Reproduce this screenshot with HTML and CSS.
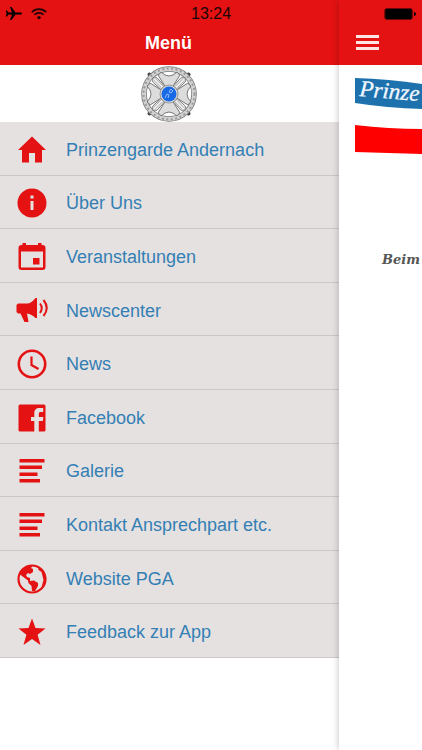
FILE: index.html
```html
<!DOCTYPE html>
<html lang="de">
<head>
<meta charset="utf-8">
<meta name="viewport" content="width=device-width, initial-scale=1">
<title>Menü</title>
<link rel="stylesheet" href="styles.css">
</head>
<body>
<div class="status">
  <div class="status-side">
    <svg width="18" height="16" viewBox="0 0 18 16"><path d="M17 7.500c0 .7-.8 1-1.800 1H10.500L6.500 14H5l2-5.500H3.500L2 10.500H.8L1.600 7.500.8 4.500H2L3.500 6.500H7L5 1h1.500l4 5.500h4.700c1 0 1.800.3 1.800 1z"/></svg>
    <svg width="16" height="12" viewBox="0 0 16 12" fill="none" stroke="#190606" stroke-width="1.600"><path d="M.8 4.200C4.800.1 11.200.1 15.200 4.200M3.400 6.800c2.600-2.600 6.600-2.600 9.200 0"/><circle cx="8" cy="9.600" r="1.700" fill="#190606" stroke="none"/></svg>
  </div>
  <time class="clock">13:24</time>
  <div class="status-side status-end">
    <svg width="33" height="14" viewBox="0 0 33 14"><rect x=".8" y="1.500" width="27.500" height="11" rx="2" fill="#000" stroke="#6b0808"/><path d="M30 5c2.600.6 2.600 3.400 0 4z"/></svg>
  </div>
</div>
<div class="app">
  <nav class="menu" aria-label="Menü">
    <header class="bar menu-bar"><h1>Menü</h1></header>
    <div class="emblem">
      <svg width="58" height="58" viewBox="-29 -29 58 58">
        <defs>
          <g id="arm"><path d="M-3.500-7L-11-19Q-9-20-8-22Q-4-18 0-18Q4-18 8-22Q9-20 11-19L3.500-7z" fill="#dcdcdc" stroke="#777" stroke-width="1"/></g>
          <g id="ray"><path d="M-2.500-9L-3-20 0-23 3-20 2.500-9z" fill="#eee" stroke="#777" stroke-width=".9"/><path d="M-1-10V-20M1.500-10V-20" stroke="#999" stroke-width=".8"/></g>
        </defs>
        <g fill="#444"><circle cx="-19.500" cy="-19.500" r="2"/><circle cx="19.500" cy="-19.500" r="2"/><circle cx="-19.500" cy="19.500" r="2"/><circle cx="19.500" cy="19.500" r="2"/></g>
        <circle r="25" fill="#fff" stroke="#777" stroke-width="5.500"/>
        <circle r="25" fill="none" stroke="#d2d2d2" stroke-width="4"/>
        <circle r="25.500" fill="none" stroke="#999" stroke-width="2" stroke-dasharray="2 2.500"/>
        <use href="#ray" transform="rotate(45)"/><use href="#ray" transform="rotate(135)"/><use href="#ray" transform="rotate(225)"/><use href="#ray" transform="rotate(315)"/>
        <use href="#arm"/><use href="#arm" transform="rotate(90)"/><use href="#arm" transform="rotate(180)"/><use href="#arm" transform="rotate(270)"/>
        <circle r="9" fill="#d8d8d8" stroke="#999"/>
        <circle r="7.500" fill="#1769e6"/>
        <path d="M-4 4L-2 0 0 1-1 4M0-2L2-5 4-3 2-1z" fill="none" stroke="#91bcff" stroke-width="1"/>
      </svg>
    </div>
    <ul class="items">
      <li><a href="#home"><svg class="icon" viewBox="0 0 32 32"><path d="M16 2.500L30 16h-4v12.500h-7V19h-6v9.500H6V16H2z"/></svg>Prinzengarde Andernach</a></li>
      <li><a href="#about"><svg class="icon" viewBox="0 0 32 32"><circle cx="16" cy="16" r="14.500"/><path d="M14.500 8.500h3v3h-3zM14.500 14h3v9h-3z" fill="#e5e1e0"/></svg>Über Uns</a></li>
      <li><a href="#events"><svg class="icon" viewBox="0 0 32 32"><path fill-rule="evenodd" d="M6.500 2h3.500v2h12V2h3.500v2h1a3 3 0 0 1 3 3v19a3 3 0 0 1-3 3H5.500a3 3 0 0 1-3-3V7a3 3 0 0 1 3-3h1zM5 10.500v16h22v-16zM17 17h6.500v6.500H17z"/></svg>Veranstaltungen</a></li>
      <li><a href="#newscenter"><svg class="icon" viewBox="0 0 32 32"><path d="M2 8.500h9c3 0 6-2 8.500-5.500H21v20h-1.500C17 20.500 14 19 11 18.500L12.500 27H8.500L4.500 18.500H2L.5 17v-7z"/><path d="M24 8.500q3.500 4.500 0 9.500M27.500 5q6.500 8 0 16" fill="none" stroke="#e41212" stroke-width="2"/></svg>Newscenter</a></li>
      <li><a href="#news"><svg class="icon" viewBox="0 0 32 32" ><circle cx="16" cy="16" r="13.200" fill="none" stroke="#e41212" stroke-width="2.600"/><path d="M15.500 8.500V17l7 4" fill="none" stroke="#e41212" stroke-width="2.200"/></svg>News</a></li>
      <li><a href="#facebook"><svg class="icon" viewBox="0 0 32 32"><path d="M4 2.500h24a1.500 1.500 0 0 1 1.500 1.500v24a1.500 1.500 0 0 1-1.500 1.500h-5.200V19h4l.6-4h-4.600v-3c0-1.500.7-2 2.200-2h2.200V6h-3.700c-3.600 0-5.200 2-5.200 5.200V15h-3.300v4h3.300v10.500H4A1.500 1.500 0 0 1 2.500 28V4A1.500 1.500 0 0 1 4 2.500z"/></svg>Facebook</a></li>
      <li><a href="#galerie"><svg class="icon" viewBox="0 0 32 32"><path d="M3.500 4h25v3.500h-25zM3.500 10.500h22.500v3.500H3.500zM3.500 17.500h18v3.500h-18zM3.500 24H24v3.500H3.500z"/></svg>Galerie</a></li>
      <li><a href="#kontakt"><svg class="icon" viewBox="0 0 32 32"><path d="M3.500 4h25v3.500h-25zM3.500 10.500h22.500v3.500H3.500zM3.500 17.500h18v3.500h-18zM3.500 24H24v3.500H3.500z"/></svg>Kontakt Ansprechpart etc.</a></li>
      <li><a href="#website"><svg class="icon" viewBox="0 0 32 32"><circle cx="16" cy="16" r="13.500" fill="none" stroke="#e41212" stroke-width="2.200"/><path d="M4 9C7 4 12 2 17 2.500L15 5l2 1v3l-3 2-2-1-2 2 1 2 3 1v3l4-.5 4 2.500v3l-3 5h-3l-.5-5-3-3-.5-2.500-4-3-4-3zM22 3c5 3 8 8 7.500 13-.5 3-2 6-4 8l2-7-2-8-3-2z"/></svg>Website PGA</a></li>
      <li><a href="#feedback"><svg class="icon" viewBox="0 0 32 32"><path d="M16 2.500l3.500 9.500L29.500 12.500 21.600 18.800 24.500 29 16 23 7.500 29 10.400 18.800 2.500 12.500 12.500 12z"/></svg>Feedback zur App</a></li>
    </ul>
  </nav>
  <main class="page">
    <header class="bar page-bar">
      <button class="toggle" type="button" aria-label="Menü schließen"><span></span><span></span><span></span></button>
    </header>
    <svg class="banner" width="67" height="78" viewBox="0 0 67 78">
      <path d="M0 1Q34 2 67 7V32Q32 31 0 26z" fill="#1d72ae"/>
      <path d="M0 48Q34 52 67 52V77L0 75z" fill="#fe0000"/>
      <text class="banner-text" x="4" y="19" transform="rotate(5 4 19)">Prinze</text>
    </svg>
    <p class="lead">Beim</p>
  </main>
</div>
</body>
</html>
```
FILE: styles.css
```css
* {
  box-sizing: border-box;
}

body {
  margin: 0;
  background: #fff;
  font-family: "Liberation Sans", Arial, sans-serif;
}

.status {
  position: absolute;
  z-index: 2;
  top: 0;
  left: 0;
  right: 0;
  display: flex;
  align-items: center;
  height: 28px;
  padding: 0 5px;
  color: #190606;
}

.status-side {
  flex: 1;
  display: flex;
  align-items: center;
  gap: 8px;
}

.status-end {
  justify-content: flex-end;
}

.clock {
  font-size: 16px;
  line-height: 28px;
}

.app {
  display: grid;
  grid-template-columns: minmax(0, 1fr) 83px;
  min-height: 100vh;
}

.bar {
  display: flex;
  height: 65px;
  padding-top: 20px;
  justify-content: center;
  align-items: center;
  background: #e41212;
}

.menu-bar,
.emblem {
  padding-right: 2px;
}

h1 {
  margin: 0;
  color: #fff;
  font-size: 18px;
  line-height: 40px;
}

.emblem {
  display: flex;
  justify-content: center;
  height: 57px;
}

.items {
  display: grid;
  grid-auto-rows: 1fr;
  min-height: 536px;
  margin: 0;
  padding: 0;
  list-style: none;
  background: #e5e1e0;
}

.items li {
  display: flex;
  border-bottom: 1px solid #cac7c6;
}

.items a {
  flex: 1;
  display: flex;
  align-items: center;
  gap: 18px;
  padding: 3px 16px 0;
  color: #337fb5;
  font-size: 18px;
  line-height: 24px;
  text-decoration: none;
}

.icon {
  flex: none;
  width: 32px;
  height: 32px;
  fill: #e41212;
}

.page {
  position: relative;
  overflow: clip;
  overflow-clip-margin: 8px;
  background: #fff;
  box-shadow: 0 0 7px rgba(0, 0, 0, 0.25);
}

.page-bar {
  justify-content: flex-start;
  padding-left: 17px;
}

.toggle {
  display: grid;
  gap: 3px;
  width: 23px;
  padding: 0;
  border: 0;
  background: none;
}

.toggle span {
  height: 3px;
  background: #ffe4e4;
}

.banner {
  display: block;
  margin: 12px 0 0 16px;
}

.banner-text {
  fill: #f2f8ff;
  stroke: #f2f8ff;
  stroke-width: 0.3px;
  font-family: "Liberation Serif", serif;
  font-size: 23px;
  font-style: italic;
}

.lead {
  margin: 95px 0 0 43px;
  color: #555;
  font-family: "DejaVu Serif", serif;
  font-size: 13px;
  font-style: italic;
  font-weight: bold;
  line-height: 20px;
}
```
